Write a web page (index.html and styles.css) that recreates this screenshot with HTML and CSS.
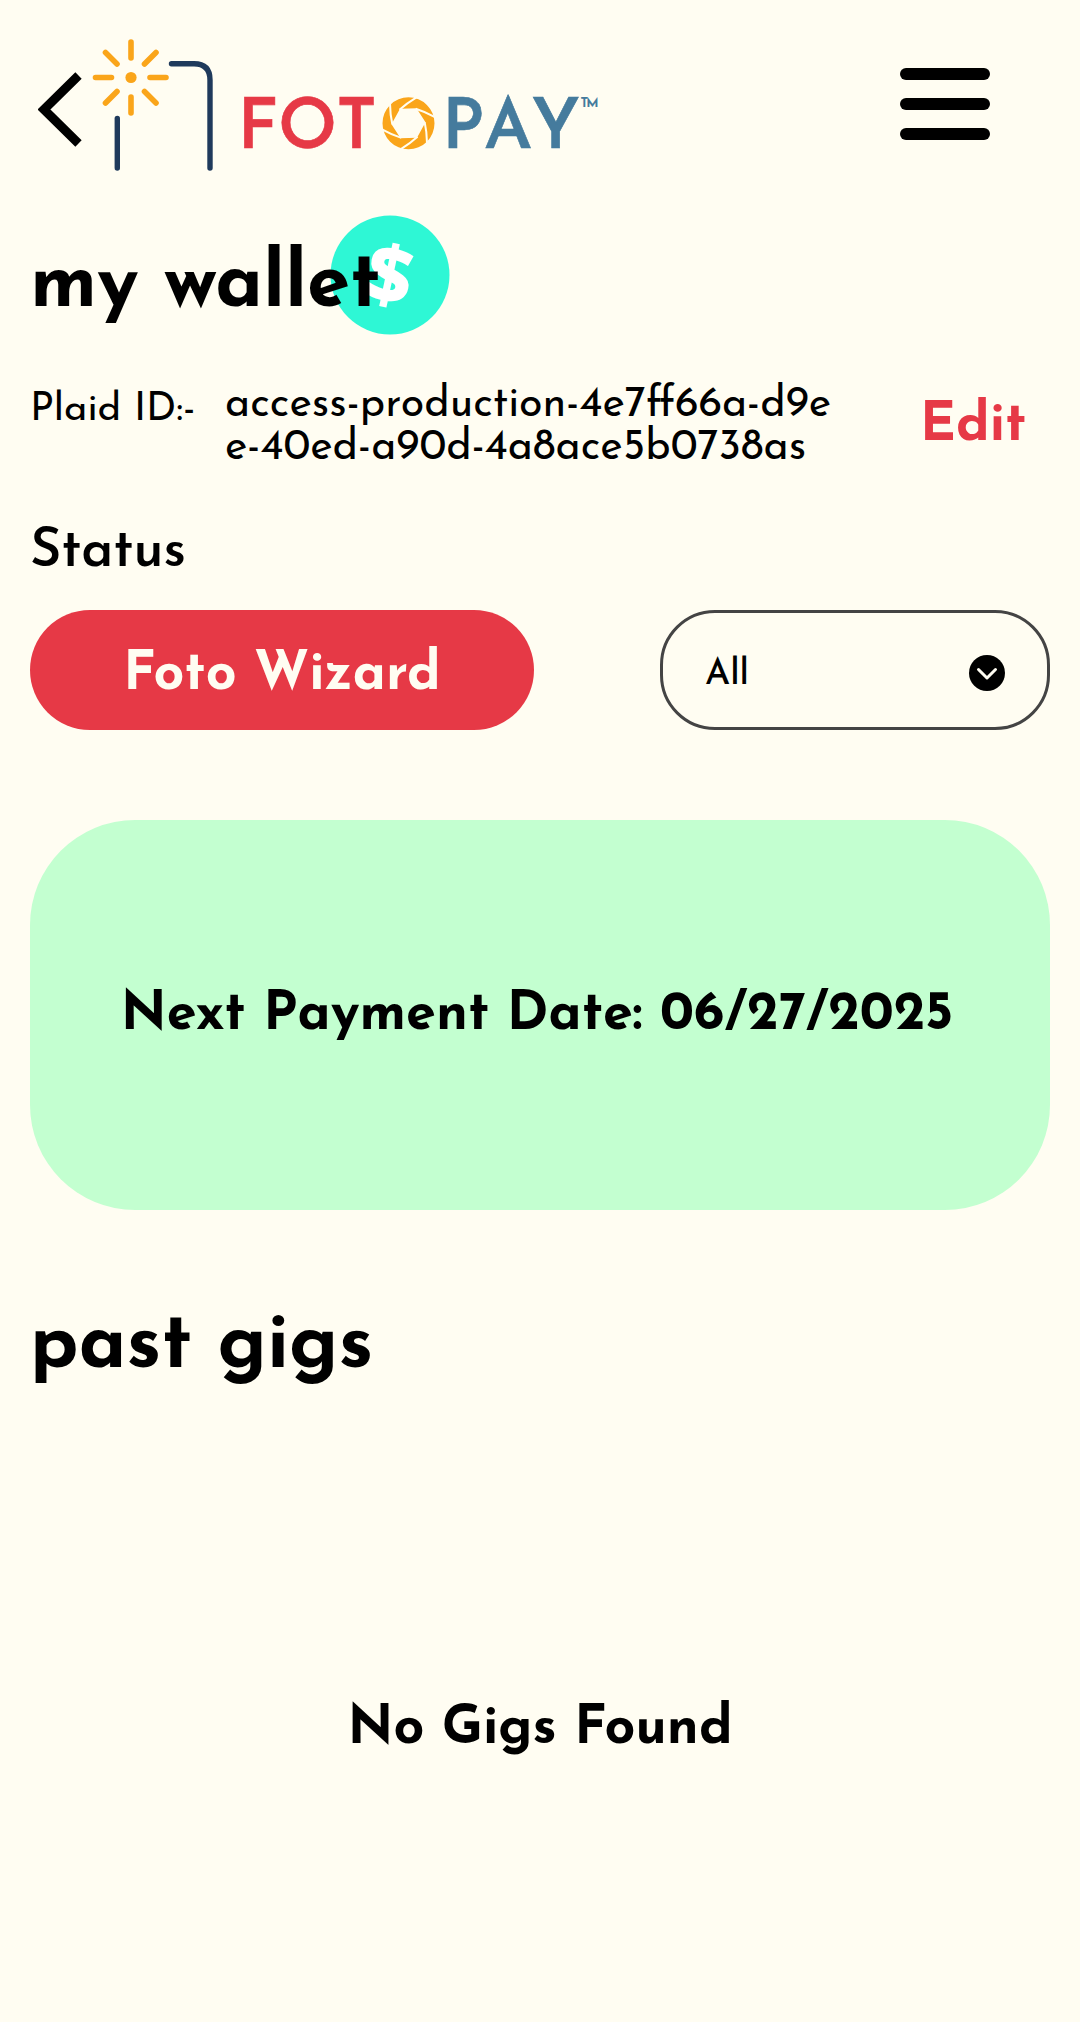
FILE: index.html
```html
<!DOCTYPE html>
<html lang="en">
<head>
    <meta charset="UTF-8">
    <meta name="viewport" content="width=device-width, initial-scale=1.0">
    <title>FotoPay - My Wallet</title>
    <link rel="stylesheet" href="styles.css">
</head>
<body>
    <!-- Header -->
    <header class="header">
        <a href="#" class="back" aria-label="Back">
            <svg width="44" height="75" viewBox="0 0 44 75">
                <path d="M40.5 3.5 L6 37.5 L40.5 71.5" fill="none" stroke="#000" stroke-width="9"/>
            </svg>
        </a>
        <svg class="logo" width="520" height="140" viewBox="90 35 520 140">
            <g stroke="#faa51a" stroke-width="5.6" stroke-linecap="round">
                <path d="M131 42v16M131 97v16M95.5 77.5h16M150 77.5h16"/>
                <path d="M105.5 52.5l11.5 11.5M156 52.5l-11.5 11.5M105.5 103l11.5-11.5M156 103l-11.5-11.5"/>
            </g>
            <circle cx="131" cy="77.5" r="5.6" fill="#faa51a"/>
            <g fill="none" stroke="#1f3a5c" stroke-width="5.4" stroke-linecap="round">
                <path d="M117.3 118.5V168"/>
                <path d="M171.5 63.8H194Q210 63.8 210 80V168"/>
            </g>
            <text class="logo-text logo-red" y="147.5" x="237.5 278 336.5">FOT</text>
            <!-- shutter -->
            <g transform="translate(408.5 123.3)">
                <path fill="#faa51a" fill-rule="evenodd" d="M26 0A26 26 0 1 1 -26 0A26 26 0 1 1 26 0ZM-8.5 -14.5L8 -15L17 -1L8.5 14.5L-8 15L-17 1Z"/>
                <g class="blades">
                    <path id="blade" d="M8 -26Q-2 -20 -9 -13.5"/>
                    <use href="#blade" transform="rotate(60)"/>
                    <use href="#blade" transform="rotate(120)"/>
                    <use href="#blade" transform="rotate(180)"/>
                    <use href="#blade" transform="rotate(240)"/>
                    <use href="#blade" transform="rotate(300)"/>
                </g>
            </g>
            <text class="logo-text logo-blue" y="147.5" x="442 484 531.5">PAY</text>
            <text class="logo-tm" y="107" x="580.5" textLength="18">TM</text>
        </svg>
        <button class="menu" aria-label="Menu">
            <span></span>
            <span></span>
            <span></span>
        </button>
    </header>

    <main class="container">
        <div class="title">
            <svg class="coin" width="120" height="120" viewBox="0 0 120 120">
                <circle cx="60" cy="60" r="59.5" fill="#2ef7d5"/>
                <text class="coin-sign" x="59.5" y="88" text-anchor="middle" transform="rotate(12 60 60)">$</text>
            </svg>
            <h1>my wallet</h1>
        </div>

        <div class="plaid">
            <span class="plaid-label">Plaid ID:-</span>
            <span class="plaid-id">access-production-4e7ff66a-d9e<br>e-40ed-a90d-4a8ace5b0738as</span>
            <a href="#" class="edit">Edit</a>
        </div>

        <h3 class="status">Status</h3>
        <div class="controls">
            <button class="wizard">Foto Wizard</button>
            <div class="select">
                <span>All</span>
                <svg width="36" height="36" viewBox="0 0 36 36">
                    <circle cx="18" cy="18" r="18" fill="#000"/>
                    <path d="M9.5 14.5L18 23L26.5 14.5" fill="none" stroke="#fffdf2" stroke-width="3" stroke-linecap="round" stroke-linejoin="round"/>
                </svg>
            </div>
        </div>

        <div class="payment-card">Next Payment Date: 06/27/2025</div>

        <h2>past gigs</h2>
        <p class="empty">No Gigs Found</p>
    </main>
</body>
</html>
```

FILE: styles.css
```css
* {
    box-sizing: border-box;
}

body {
    margin: 0;
    min-height: 2022px;
    background-color: #fffdf2;
    color: #000;
    font-family: "Josefin Sans", Lato, sans-serif;
}

button {
    border: none;
    background: none;
    padding: 0;
    font-family: inherit;
    cursor: pointer;
}

.header {
    display: flex;
    align-items: flex-start;
    height: 215px;
    padding: 35px 90px 0 38px;
}

.back {
    width: 52px;
    padding-top: 37px;
}

.back svg,
.logo {
    display: block;
}

.logo-text {
    font-size: 69px;
    font-weight: 600;
}

.logo-red {
    fill: #e63946;
    stroke: #e63946;
    stroke-width: 0.6px;
}

.logo-blue {
    fill: #457b9d;
    stroke: #457b9d;
    stroke-width: 0.6px;
}

.logo-tm {
    font-size: 13px;
    font-weight: 700;
    fill: #457b9d;
}

.blades {
    fill: none;
    stroke: #fffdf2;
    stroke-width: 2;
}

.menu {
    display: flex;
    flex-direction: column;
    gap: 18px;
    width: 90px;
    margin-top: 33px;
    margin-left: auto;
}

.menu span {
    width: 100%;
    height: 12px;
    border-radius: 6px;
    background-color: #000;
}

.container {
    padding: 0 30px;
}

.title {
    position: relative;
    height: 120px;
    padding-top: 12px;
}

.coin {
    position: absolute;
    top: 0;
    left: 300px;
}

.coin-sign {
    font-family: "Open Sans", sans-serif;
    font-size: 79px;
    font-weight: 800;
    fill: #fff;
}

h1,
h2 {
    position: relative;
    margin: 0;
    font-size: 78px;
    font-weight: 700;
    line-height: 120px;
}

h1 {
    letter-spacing: -0.2px;
}

.plaid {
    display: flex;
    height: 86px;
    margin-top: 44px;
    line-height: 43px;
}

.plaid-label {
    width: 195px;
    padding-top: 10px;
    font-size: 40px;
}

.plaid-id {
    width: 695px;
    padding-top: 5px;
    font-size: 43px;
    white-space: nowrap;
}

.edit {
    padding-top: 18px;
    color: #e63946;
    font-size: 54px;
    font-weight: 700;
    line-height: 60px;
    text-decoration: none;
}

.status {
    margin: 58px 0 27px;
    font-size: 54px;
    font-weight: 600;
    line-height: 60px;
    letter-spacing: -0.2px;
}

.controls {
    display: flex;
    justify-content: space-between;
}

.wizard {
    width: 504px;
    height: 120px;
    padding-top: 11px;
    border-radius: 60px;
    background-color: #e63946;
    color: #fffdf2;
    font-size: 54px;
    font-weight: 700;
}

.select {
    display: flex;
    align-items: center;
    justify-content: space-between;
    width: 390px;
    height: 120px;
    padding: 10px 42px 0;
    border: 3px solid #444;
    border-radius: 55px;
    font-size: 36px;
    font-weight: 500;
}

.select svg {
    margin-bottom: 4px;
}

.payment-card {
    display: flex;
    align-items: center;
    justify-content: center;
    height: 390px;
    margin-top: 90px;
    padding: 0 6px 0 0;
    border-radius: 105px;
    background-color: #c3ffd0;
    font-size: 54px;
    font-weight: 700;
    white-space: nowrap;
}

h2 {
    margin-top: 88px;
    line-height: 100px;
}

.empty {
    margin: 302px 0 0;
    font-size: 54px;
    font-weight: 700;
    line-height: 60px;
    text-align: center;
}
```
